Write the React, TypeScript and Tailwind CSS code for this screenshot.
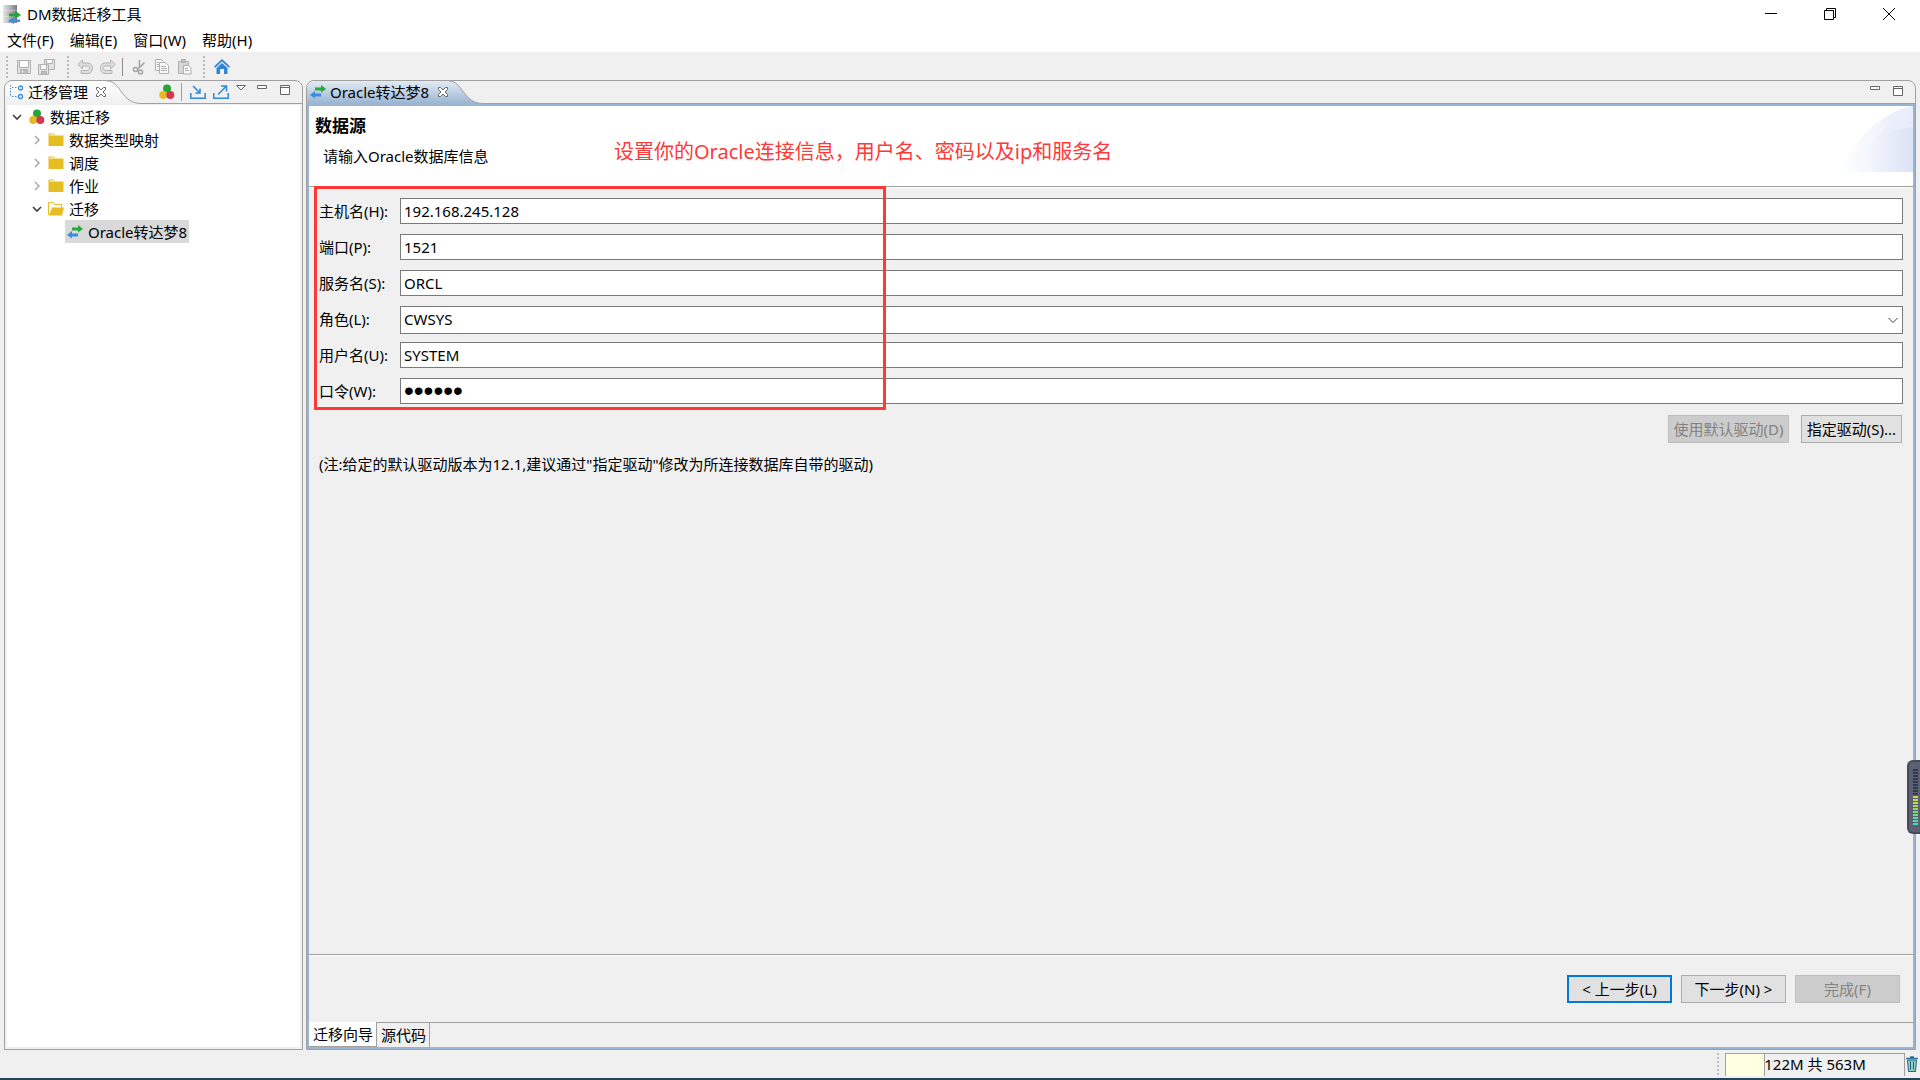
import React, { useState } from 'react';

type IconProps = { className?: string };

const menus = ['文件(F)', '编辑(E)', '窗口(W)', '帮助(H)'];

const folders = [
  { id: 'types', label: '数据类型映射' },
  { id: 'schedule', label: '调度' },
  { id: 'jobs', label: '作业' },
];

const AppIcon = () => (
  <svg className="w-[18px] h-5" viewBox="0 0 18 20">
    <defs>
      <linearGradient id="server" x1="0" x2="1">
        <stop offset="0" stopColor="#e4e4e4" />
        <stop offset="0.5" stopColor="#b4b4b4" />
        <stop offset="1" stopColor="#7c7c7c" />
      </linearGradient>
    </defs>
    <path d="M0 1h14v18H0z" fill="url(#server)" />
    <path d="M0 6.500h14M0 12.500h14" stroke="#fff" strokeOpacity="0.3" />
    <path d="M6 9.500h6V6.500l6 4.500-6 4v-2.500H6z" fill="#1fa83a" />
    <path d="M17 15.500h-6v-2.500l-6 4 6 3v-2h6z" fill="#3b8ee0" />
  </svg>
);

const ArrowsIcon = () => (
  <svg className="w-4 h-4" viewBox="0 0 16 16">
    <path d="M5 3.500h6V1l5 4-5 3.500V6.500H5z" fill="#27ab3c" />
    <path d="M11 9.500H5V7l-5 4 5 3.500V12.500h6z" fill="#3a8ddc" />
  </svg>
);

const BallsIcon = () => (
  <svg className="w-4 h-4" viewBox="0 0 16 16">
    <circle cx="8" cy="4.500" r="4" fill="#23a637" />
    <circle cx="4.300" cy="11" r="4" fill="#e6bb22" />
    <circle cx="11.300" cy="11" r="4" fill="#d03a4c" />
  </svg>
);

const FolderIcon = () => (
  <svg className="w-4 h-4" viewBox="0 0 16 16">
    <path d="M0.500 1.500H6l1 2h8.500V14H0.500z" fill="#e6bd22" />
    <path d="M1.500 3h5" stroke="#fff" />
  </svg>
);

const FolderOpenIcon = () => (
  <svg className="w-4 h-4" viewBox="0 0 16 16">
    <path d="M0.500 14V1.500h5l1 2h7V7" fill="none" stroke="#e6bd22" />
    <path d="M1 14.500L4 6.500h12l-2 8z" fill="#e6bd22" />
  </svg>
);

const TreeIcon = () => (
  <svg className="w-4 h-4" viewBox="0 0 16 16" fill="none">
    <path d="M1.500 1v12M3 3.500h6M3 12.500h6" stroke="#3a8ddc" strokeDasharray="1.500 1.500" />
    <circle cx="11.500" cy="4" r="2" stroke="#3a8ddc" strokeWidth="1.300" />
    <circle cx="11.500" cy="12.500" r="2" stroke="#3a8ddc" strokeWidth="1.300" />
  </svg>
);

const CloseGlyph = ({ className }: IconProps) => (
  <svg className={className} viewBox="0 0 12 12">
    <path
      d="M1.500 1.500h2L6 4l2.500-2.500h2v2L8 6l2.500 2.500v2h-2L6 8l-2.500 2.500h-2v-2L4 6 1.500 3.500z"
      fill="#fff"
      stroke="#666"
    />
  </svg>
);

const SaveIcon = () => (
  <svg className="w-4 h-4" viewBox="0 0 16 16" fill="none" stroke="#b0b0b0">
    <path d="M1.500 1.500h13v13h-13z" fill="#e3e3e3" />
    <path d="M3.500 1.500h9v7h-9z" fill="#fafafa" />
    <path d="M4.500 14.500v-4h7v4" fill="#bcbcbc" />
    <path d="M6.500 11.500v2" stroke="#fff" />
  </svg>
);

const SaveAllIcon = () => (
  <svg className="w-[17px] h-4" viewBox="0 0 17 16" fill="none" stroke="#b0b0b0">
    <path d="M6.500 0.500h10v10h-10z" fill="#e3e3e3" />
    <path d="M8.500 0.500h6v4h-6z" fill="#fafafa" />
    <path d="M0.500 5.500h10v10h-10z" fill="#e3e3e3" />
    <path d="M2.500 5.500h6v5h-6z" fill="#fafafa" />
    <path d="M3.500 15.500v-3h5v3" fill="#bcbcbc" />
  </svg>
);

const UndoIcon = ({ className }: IconProps) => (
  <svg className={className} viewBox="0 0 16 16">
    <path
      d="M5.500 1L0.800 5.500l4.700 4.500V7h4.500c3.500 0 3.500 4.500 0 4.500H4v3h7c6 0 6-10.500 0-10.500H5.500z"
      fill="#dedede"
      stroke="#b4b4b4"
    />
  </svg>
);

const CutIcon = () => (
  <svg className="w-4 h-4" viewBox="0 0 16 16" fill="none" stroke="#a3a3a3" strokeWidth="1.500">
    <path d="M8.500 1v8M13.500 3.500L7 10" />
    <circle cx="4.500" cy="10.500" r="2" />
    <circle cx="9.500" cy="13" r="2" />
  </svg>
);

const CopyIcon = () => (
  <svg className="w-4 h-4" viewBox="0 0 16 16" fill="#f6f6f6" stroke="#b3b3b3">
    <path d="M1.500 0.500h6l2 2v9h-8z" />
    <path d="M5.500 3.500h6l3 3v8h-9z" />
    <path d="M3 3.500h2M3 5.500h2M3 7.500h2M7 7.500h5M7 9.500h6M7 11.500h6" />
  </svg>
);

const PasteIcon = () => (
  <svg className="w-4 h-4" viewBox="0 0 16 16" stroke="#b0b0b0">
    <path d="M1.500 2.500h10v12h-10z" fill="#d6d6d6" />
    <path d="M4.500 0.500h4v3h-4z" fill="#c0c0c0" />
    <path d="M6.500 6.500h5l2.500 2.500v6H6.500z" fill="#f8f8f8" />
    <path d="M8 9.500h3M8 11.500h4" />
  </svg>
);

const HomeIcon = () => (
  <svg className="w-4 h-4" viewBox="0 0 16 16" fill="#2f86d8">
    <path d="M8 0l8 7.500-1.200 1.200L8 2.500 1.200 8.700 0 7.500z" />
    <path d="M8 4l5.500 5v6H10v-5H6v5H2.500V9z" />
  </svg>
);

const ImportIcon = () => (
  <svg className="w-4 h-4" viewBox="0 0 16 16" fill="none" stroke="#2f86d8" strokeWidth="1.500">
    <path d="M0.800 9v5.300h14.400V9" />
    <path d="M3 2l6.500 6.500M10 4.500V9H5.500" />
  </svg>
);

const ExportIcon = () => (
  <svg className="w-4 h-4" viewBox="0 0 16 16" fill="none" stroke="#2f86d8" strokeWidth="1.500">
    <path d="M0.800 9v5.300h14.400V9" />
    <path d="M5 10.500L12.500 3M8 2h5.500v5.500" />
  </svg>
);

const MinimizePane = () => (
  <svg className="w-3 h-3" viewBox="0 0 12 12">
    <path d="M1.500 1.500h9v3h-9z" fill="#fff" stroke="#666" />
  </svg>
);

const MaximizePane = () => (
  <svg className="w-3 h-3" viewBox="0 0 12 12">
    <path d="M1.500 1.500h9v9h-9zM1.500 3.500h9" fill="#fff" stroke="#666" />
  </svg>
);

const Chevron = ({ open }: { open?: boolean }) => (
  <svg className="w-3 h-3" viewBox="0 0 12 12" fill="none">
    {open ? (
      <path d="M2 4l4 4 4-4" stroke="#404040" strokeWidth="1.600" />
    ) : (
      <path d="M4 2l4 4-4 4" stroke="#a3a3a3" strokeWidth="1.400" />
    )}
  </svg>
);

const TrashIcon = () => (
  <svg className="w-3 h-4" viewBox="0 0 12 16">
    <path d="M1.500 4h9l-1 11.500h-7z" fill="#8fd0c4" stroke="#22647f" />
    <path d="M0 2.500h12M4 1h4" stroke="#2f6f9a" strokeWidth="1.400" />
    <path d="M4.500 5.500v8M7.500 5.500v8" stroke="#22647f" />
  </svg>
);

const Grip = () => <span className="h-[22px] border-l-2 border-dotted border-[#bdbdbd]" />;

const IconButton = ({
  label,
  className = '',
  disabled,
  children,
}: {
  label: string;
  className?: string;
  disabled?: boolean;
  children: React.ReactNode;
}) => (
  <button type="button" aria-label={label} disabled={disabled} className={`flex items-center justify-center ${className}`}>
    {children}
  </button>
);

const TitleBar = () => (
  <header className="bg-white">
    <div className="flex h-[27px] items-center pl-[3px] pr-0.5">
      <AppIcon />
      <h1 className="ml-1.5 flex-1">DM数据迁移工具</h1>
      <IconButton label="最小化" className="h-7 w-[59px]">
        <svg className="w-3 h-3" viewBox="0 0 12 12">
          <path d="M0 5.500h12" stroke="#000" />
        </svg>
      </IconButton>
      <IconButton label="还原" className="h-7 w-[59px]">
        <svg className="w-3 h-3" viewBox="0 0 12 12" fill="none" stroke="#000">
          <path d="M0.500 2.500h9v9h-9zM2.500 2.500v-2h9v9h-2" />
        </svg>
      </IconButton>
      <IconButton label="关闭" className="h-7 w-[59px]">
        <svg className="w-3 h-3" viewBox="0 0 12 12">
          <path d="M0 0l12 12M12 0L0 12" stroke="#000" />
        </svg>
      </IconButton>
    </div>
    <nav className="flex h-[25px] items-center gap-4 pl-[7px]">
      {menus.map((menu) => (
        <button key={menu} type="button">
          {menu}
        </button>
      ))}
    </nav>
  </header>
);

const Toolbar = () => (
  <div className="flex h-7 items-center pt-0.5 pl-1.5">
    <Grip />
    <div className="ml-2 flex items-center gap-1.5">
      <IconButton label="保存" disabled><SaveIcon /></IconButton>
      <IconButton label="全部保存" disabled><SaveAllIcon /></IconButton>
    </div>
    <div className="ml-3 flex items-center">
      <Grip />
      <div className="ml-2 flex items-center gap-[7px]">
        <IconButton label="撤销" disabled><UndoIcon className="w-4 h-4" /></IconButton>
        <IconButton label="重做" disabled><UndoIcon className="w-4 h-4 -scale-x-100" /></IconButton>
      </div>
    </div>
    <span className="ml-1.5 h-[18px] w-px bg-[#8c8c8c]" />
    <div className="ml-2 flex items-center gap-[7px]">
      <IconButton label="剪切" disabled><CutIcon /></IconButton>
      <IconButton label="复制" disabled><CopyIcon /></IconButton>
      <IconButton label="粘贴" disabled><PasteIcon /></IconButton>
    </div>
    <div className="ml-2.5 flex items-center gap-[9px]">
      <Grip />
      <IconButton label="主页"><HomeIcon /></IconButton>
    </div>
  </div>
);

const Navigator = () => (
  <aside className="flex w-[299px] shrink-0 flex-col rounded-t-lg border border-[#a0a0a0] bg-[#f0f0f0]">
    <div className="flex h-[23px]">
      <div className="flex items-center rounded-tl-lg bg-linear-to-b from-white to-[#f0f0f0] pb-0.5 pl-1">
        <TreeIcon />
        <h2 className="ml-[3px]">迁移管理</h2>
        <button type="button" aria-label="关闭视图" className="ml-[7px]">
          <CloseGlyph className="w-3 h-3" />
        </button>
      </div>
      <svg className="h-[23px] w-[34px]" viewBox="0 0 34 23">
        <defs>
          <linearGradient id="viewTab" x1="0" y1="0" x2="0" y2="1">
            <stop offset="0" stopColor="#fff" />
            <stop offset="1" stopColor="#f0f0f0" />
          </linearGradient>
        </defs>
        <path d="M0 0C14 0 14 22.500 34 22.500H0z" fill="url(#viewTab)" />
        <path d="M0 0C14 0 14 22.500 34 22.500" fill="none" stroke="#a0a0a0" />
      </svg>
      <div className="flex flex-1 items-center justify-end border-b border-[#a0a0a0] pr-[11px]">
        <IconButton label="数据迁移"><BallsIcon /></IconButton>
        <span className="mx-1.5 h-[18px] w-px bg-[#a0a0a0]" />
        <IconButton label="导入" className="ml-0.5"><ImportIcon /></IconButton>
        <IconButton label="导出" className="ml-[7px]"><ExportIcon /></IconButton>
        <div className="ml-1.5 flex h-[14px] items-start gap-[9px] self-start pt-[3px]">
          <IconButton label="视图菜单">
            <svg className="w-3 h-3" viewBox="0 0 12 12">
              <path d="M1.500 1.500h9L6 6z" fill="#fff" stroke="#666" />
            </svg>
          </IconButton>
          <IconButton label="最小化视图"><MinimizePane /></IconButton>
          <IconButton label="最大化视图" className="ml-0.5"><MaximizePane /></IconButton>
        </div>
      </div>
    </div>
    <div className="mx-0.5 mt-px mb-0.5 flex-1 bg-white">
      <ul>
        <li>
          <div className="flex h-[23px] items-center pl-1">
            <Chevron open />
            <span className="ml-1.5 mr-[5px]"><BallsIcon /></span>
            数据迁移
          </div>
          <ul className="pl-6">
            {folders.map((folder) => (
              <li key={folder.id} className="flex h-[23px] items-center">
                <Chevron />
                <span className="mx-[5px]"><FolderIcon /></span>
                {folder.label}
              </li>
            ))}
            <li>
              <div className="flex h-[23px] items-center">
                <Chevron open />
                <span className="mx-[5px]"><FolderOpenIcon /></span>
                迁移
              </div>
              <ul className="pl-[34px]">
                <li className="flex h-[23px] w-fit items-center gap-[5px] bg-[#d9d9d9] px-0.5">
                  <ArrowsIcon />
                  Oracle转达梦8
                </li>
              </ul>
            </li>
          </ul>
        </li>
      </ul>
    </div>
  </aside>
);

const inputStyle = 'h-[26px] w-full border border-[#7a7a7a] bg-white px-[3px] outline-none';

const Field = ({ id, label, children }: { id: string; label: string; children: React.ReactNode }) => (
  <div className="flex h-9 items-start">
    <label htmlFor={id} className="w-[81px] shrink-0 leading-[26px]">
      {label}
    </label>
    <div className="relative flex-1">{children}</div>
  </div>
);

const SourceForm = () => {
  const [form, setForm] = useState({
    host: '192.168.245.128',
    port: '1521',
    service: 'ORCL',
    role: 'CWSYS',
    user: 'SYSTEM',
    password: 'oracle',
  });

  const update = (key: keyof typeof form) => (e: React.ChangeEvent<HTMLInputElement | HTMLSelectElement>) =>
    setForm({ ...form, [key]: e.target.value });

  return (
    <form className="relative flex-1 px-2.5 pt-2.5">
      {/* Highlight frame */}
      <div className="pointer-events-none absolute -top-0.5 left-[5px] z-10 h-56 w-[572px] border-3 border-[#ff3838]" />

      <Field id="host" label="主机名(H):">
        <input id="host" className={inputStyle} value={form.host} onChange={update('host')} />
      </Field>
      <Field id="port" label="端口(P):">
        <input id="port" className={inputStyle} value={form.port} onChange={update('port')} />
      </Field>
      <Field id="service" label="服务名(S):">
        <input id="service" className={inputStyle} value={form.service} onChange={update('service')} />
      </Field>
      <Field id="role" label="角色(L):">
        <select
          id="role"
          className="h-7 w-full appearance-none border border-[#7a7a7a] bg-white px-[3px] pb-0.5 outline-none"
          value={form.role}
          onChange={update('role')}
        >
          <option>CWSYS</option>
          <option>SYSDBA</option>
        </select>
        <svg className="pointer-events-none absolute top-2 right-1 w-3 h-3" viewBox="0 0 12 12" fill="none">
          <path d="M1.500 4L6 8.500 10.500 4" stroke="#444" />
        </svg>
      </Field>
      <Field id="user" label="用户名(U):">
        <input id="user" className={inputStyle} value={form.user} onChange={update('user')} />
      </Field>
      <Field id="password" label="口令(W):">
        <input
          id="password"
          type="password"
          className="h-[26px] w-full border border-[#7a7a7a] bg-white px-[3px] font-['Liberation_Sans',sans-serif] text-[28px] outline-none"
          value={form.password}
          onChange={update('password')}
        />
      </Field>

      <div className="flex justify-end gap-3 pt-px pr-px">
        <button type="button" disabled className="h-7 w-[121px] border border-[#bfbfbf] bg-[#cccccc] whitespace-nowrap text-[#838383]">
          使用默认驱动(D)
        </button>
        <button type="button" className="h-7 w-[101px] border border-[#adadad] bg-[#e1e1e1] whitespace-nowrap">
          指定驱动(S)...
        </button>
      </div>
      <p className="mt-[11px]">(注:给定的默认驱动版本为12.1,建议通过"指定驱动"修改为所连接数据库自带的驱动)</p>
    </form>
  );
};

const Editor = () => (
  <main className="flex min-w-0 flex-1 flex-col rounded-t-lg border border-[#a0a0a0]">
    <div className="flex h-[23px]">
      <div className="flex items-center rounded-tl-lg bg-linear-to-b from-[#e3ebf3] to-[#99b4d1] pb-0.5 pl-[3px]">
        <ArrowsIcon />
        <h2 className="ml-1">Oracle转达梦8</h2>
        <button type="button" aria-label="关闭编辑器" className="ml-2">
          <CloseGlyph className="w-3 h-3" />
        </button>
      </div>
      <svg className="h-[23px] w-[34px]" viewBox="0 0 34 23">
        <defs>
          <linearGradient id="editorTab" x1="0" y1="0" x2="0" y2="1">
            <stop offset="0" stopColor="#e3ebf3" />
            <stop offset="1" stopColor="#99b4d1" />
          </linearGradient>
        </defs>
        <path d="M0 0C14 0 14 22.500 34 22.500V23H0z" fill="url(#editorTab)" />
        <path d="M0 0C14 0 14 22.500 34 22.500" fill="none" stroke="#a0a0a0" />
      </svg>
      <div className="flex flex-1 items-start justify-end gap-[11px] border-b border-[#a0a0a0] pt-1 pr-[11px]">
        <IconButton label="最小化编辑器"><MinimizePane /></IconButton>
        <IconButton label="最大化编辑器"><MaximizePane /></IconButton>
      </div>
    </div>

    <div className="flex flex-1 flex-col border-2 border-[#99b4d1] bg-[#f0f0f0]">
      {/* Wizard header */}
      <div className="flex h-[81px] border-b border-[#a0a0a0] bg-white">
        <div className="w-[305px] pt-[9px] pl-1.5">
          <h3 className="text-[17px] leading-[22px] font-bold">数据源</h3>
          <p className="mt-[9px] pl-2">请输入Oracle数据库信息</p>
        </div>
        <p className="flex-1 pt-[33px] text-xl leading-[26px] text-[#ff3838]">
          设置你的Oracle连接信息，用户名、密码以及ip和服务名
        </p>
        <svg className="h-[66px] w-[73px]" viewBox="0 0 73 66">
          <defs>
            <linearGradient id="outer" x1="0" x2="1">
              <stop offset="0" stopColor="#fff" />
              <stop offset="1" stopColor="#e6ebfa" />
            </linearGradient>
            <linearGradient id="inner" x1="0" x2="1">
              <stop offset="0" stopColor="#fff" />
              <stop offset="0.4" stopColor="#f3f6fd" />
              <stop offset="1" stopColor="#dbe2f6" />
            </linearGradient>
          </defs>
          <path d="M0 66C14 34 40 6 73 0v66z" fill="url(#outer)" />
          <path d="M34 38C44 20 56 6 73 0v24z" fill="#e9eefb" fillOpacity="0.7" />
          <path d="M0 66C16 42 42 24 73 21v45z" fill="url(#inner)" />
        </svg>
      </div>
      <div className="h-px bg-white" />

      <SourceForm />

      <div className="border-t border-[#a0a0a0]">
        <div className="flex justify-end gap-[9px] border-t border-white py-[19px] pr-[13px]">
          <button type="button" className="h-7 w-[105px] border-2 border-[#0078d7] bg-[#e1e1e1]">
            &lt; 上一步(L)
          </button>
          <button type="button" className="h-7 w-[105px] border border-[#adadad] bg-[#e1e1e1]">
            下一步(N) &gt;
          </button>
          <button type="button" disabled className="h-7 w-[105px] border border-[#bfbfbf] bg-[#cccccc] text-[#838383]">
            完成(F)
          </button>
        </div>
      </div>

      <div className="flex h-[25px]">
        <button type="button" className="border-r border-b border-[#a0a0a0] bg-white pr-[3px] pl-1 whitespace-nowrap">
          迁移向导
        </button>
        <button type="button" className="border-t border-r border-[#a0a0a0] pr-[3px] pl-1 whitespace-nowrap">
          源代码
        </button>
        <span className="flex-1 border-t border-[#a0a0a0]" />
      </div>
    </div>
  </main>
);

const StatusBar = () => {
  const used = 122;
  const total = 563;

  return (
    <footer className="flex h-[30px] items-center justify-end border-b-2 border-[#24455c] pr-0.5">
      <Grip />
      <div className="relative ml-1.5 flex h-[23px] w-[180px] items-center justify-center border-x border-t border-[#a0a0a0] pb-0.5">
        <div
          className="absolute inset-y-0 left-0 border-r border-[#a0a0a0] bg-[#ffffe1]"
          style={{ width: `${(used / total) * 100}%` }}
        />
        <span className="relative">{used}M 共 {total}M</span>
      </div>
      <IconButton label="运行垃圾回收" className="ml-px"><TrashIcon /></IconButton>
    </footer>
  );
};

const levels = [
  'bg-[#31394a]', 'bg-[#31394a]', 'bg-[#31394a]', 'bg-[#31394a]', 'bg-[#31394a]',
  'bg-[#31394a]', 'bg-[#31394a]', 'bg-[#31394a]', 'bg-[#31394a]', 'bg-[#d6d936]',
  'bg-[#c9d83f]', 'bg-[#b9d84a]', 'bg-[#a9d856]', 'bg-[#98d965]', 'bg-[#86d976]',
  'bg-[#73da86]', 'bg-[#60db98]', 'bg-[#50dcaa]', 'bg-[#3fdcc0]',
];

// Floating meter docked to the screen edge
const LevelMeter = () => (
  <div className="absolute top-[760px] right-0 z-20 flex h-[74px] w-[13px] flex-col items-end justify-center gap-px rounded-l-md border-2 border-r-0 border-[#474c5c] bg-[#5b6175] pr-0.5">
    {levels.map((color, i) => (
      <span key={i} className={`h-0.5 w-[5px] ${color}`} />
    ))}
  </div>
);

export default function App() {
  return (
    <div className="relative flex h-screen flex-col overflow-hidden bg-[#f0f0f0] font-['Noto_Sans','Noto_Sans_CJK_SC',sans-serif] text-[15px] leading-5 text-black">
      <TitleBar />
      <Toolbar />
      <div className="flex min-h-0 flex-1 gap-[3px] px-1">
        <Navigator />
        <Editor />
      </div>
      <StatusBar />
      <LevelMeter />
    </div>
  );
}
